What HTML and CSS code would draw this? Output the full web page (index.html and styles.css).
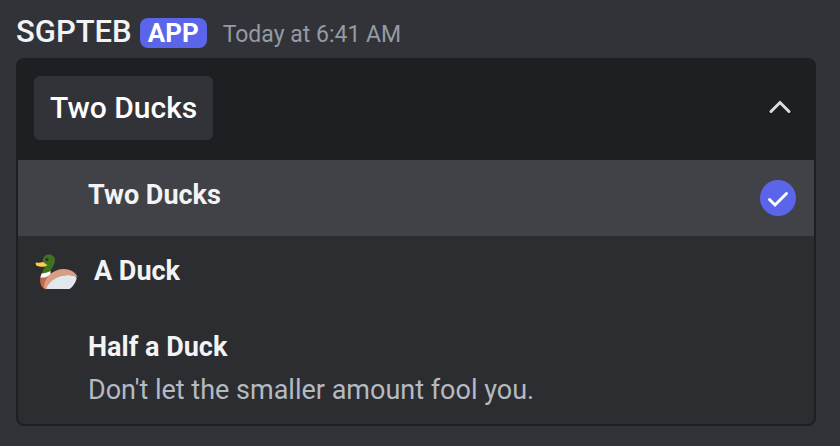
FILE: index.html
```
<!DOCTYPE html>
<html lang="en">
<head>
<meta charset="utf-8">
<meta name="viewport" content="width=device-width, initial-scale=1">
<title>SGPTEB</title>
<link rel="stylesheet" href="styles.css">
</head>
<body>
<article class="message">
  <header class="message-header">
    <span class="author">SGPTEB</span>
    <span class="app-tag">APP</span>
    <time class="timestamp">Today at 6:41 AM</time>
  </header>
  <div class="select">
    <button class="select-trigger" type="button" aria-haspopup="listbox" aria-expanded="true" aria-controls="duck-options">
      <span class="chip">Two Ducks</span>
      <svg class="chevron" viewBox="0 0 24 16" aria-hidden="true"><path d="M3 11.500 12 2.500l9 9"/></svg>
    </button>
    <div class="options" id="duck-options" role="listbox">
      <button class="option option-selected" type="button" role="option" aria-selected="true">
        <span class="option-text"><span class="option-label">Two Ducks</span></span>
        <svg class="check" viewBox="0 0 36 36" aria-hidden="true">
          <circle cx="18" cy="18" r="18"/>
          <path d="M9.500 19.500 15 25 26.500 13.500"/>
        </svg>
      </button>
      <button class="option option-with-icon" type="button" role="option" aria-selected="false">
        <svg class="duck" viewBox="0 0 44 44" aria-hidden="true">
          <path fill="#c1694f" d="M6.500 24c-1 6 0 11 4 13 2 .5 3 0 4-1l6-14-7-1z"/>
          <path fill="#292f33" d="M32 25c4-2 9-2 12-1-1 4-4 9-8 11z"/>
          <path fill="#e1e8ed" d="M12 36c2-7 11-13 22-13 6 0 9 1 8.500 4-1 4-4 8-7 10H15c-1.500 0-3 0-3-1z"/>
          <path fill="#d99e82" d="M10 34c1-9 9-17 20-17 7 0 12 4 13.500 8-4-1-7-2-12-1.500C22 24 15 30 12 37c-1.500-.5-2-1-2-3z"/>
          <path fill="#3e721d" d="M14 2.500c4-.5 7 2 7 5.500 0 6-5 8-4.500 14-3 3-6 3-8.500 1 0-5 3.500-7 2.500-10C7 9 9 3.500 14 2.500z"/>
          <path fill="#fff" d="M7.500 21.500c3 0 6-1 9-2.500v3c-3 3-6 4-10 3.500z"/>
          <path fill="#ffcc4d" d="M2 10.500c3 1 5-.5 7-.5 2 1 2 2 4.500 3-2 2-6 2-8 1.500C2 14 1 12 2 10.500z"/>
          <circle cx="13" cy="7.500" r="1.500" fill="#292f33"/>
        </svg>
        <span class="option-text"><span class="option-label">A Duck</span></span>
      </button>
      <button class="option" type="button" role="option" aria-selected="false">
        <span class="option-text">
          <span class="option-label">Half a Duck</span>
          <span class="option-description">Don't let the smaller amount fool you.</span>
        </span>
      </button>
    </div>
  </div>
</article>
</body>
</html>
```
FILE: styles.css
```
* { box-sizing: border-box; }

body {
  margin: 0;
  background: #323338;
  color: #f2f3f5;
  font-family: Roboto, "Noto Sans", sans-serif;
}

button {
  margin: 0;
  border: 0;
  background: none;
  color: inherit;
  font: inherit;
  text-align: left;
  cursor: pointer;
}

.message { padding: 12px 24px 20px 16px; }

.message-header {
  display: flex;
  align-items: baseline;
  height: 46px;
  line-height: 40px;
}

.author {
  font-size: 31px;
  font-weight: 500;
}

.app-tag {
  margin: 0 16px 0 8px;
  padding: 0 8px;
  border-radius: 8px;
  background: #5a65ea;
  color: #fff;
  font-size: 26px;
  font-weight: 700;
  line-height: 30px;
}

.timestamp {
  color: #949ba4;
  font-size: 23px;
  font-weight: 400;
}

.select {
  overflow: hidden;
  border: 2px solid #1e1f22;
  border-radius: 8px;
  background: #2b2d31;
}

.select-trigger {
  display: flex;
  align-items: center;
  justify-content: space-between;
  width: 100%;
  padding: 16px 22px 20px 16px;
  background: #1e1f22;
}

.chip {
  padding: 0 16px;
  border-radius: 6px;
  background: #323338;
  color: #fff;
  font-size: 30px;
  font-weight: 500;
  line-height: 64px;
}

.chevron {
  width: 24px;
  height: 16px;
  fill: none;
  stroke: #dbdee1;
  stroke-width: 3;
  stroke-linecap: round;
}

.options {
  display: flex;
  flex-direction: column;
}

.option {
  display: flex;
  align-items: center;
  padding: 16px 18px 16px 70px;
}

.option-selected { background: #414247; }

.option-with-icon {
  gap: 16px;
  padding-left: 16px;
}

.option-text {
  display: flex;
  flex: 1;
  flex-direction: column;
  gap: 6px;
  min-height: 44px;
}

.option-label {
  font-size: 27px;
  font-weight: 700;
  line-height: 38px;
}

.option-description {
  color: #b5bac1;
  font-size: 27px;
  font-weight: 400;
  line-height: 36px;
}

.check {
  width: 36px;
  height: 36px;
}

.check circle { fill: #5a65ea; }

.check path {
  fill: none;
  stroke: #fff;
  stroke-width: 3;
  stroke-linecap: round;
}

.duck {
  width: 44px;
  height: 44px;
}
```
